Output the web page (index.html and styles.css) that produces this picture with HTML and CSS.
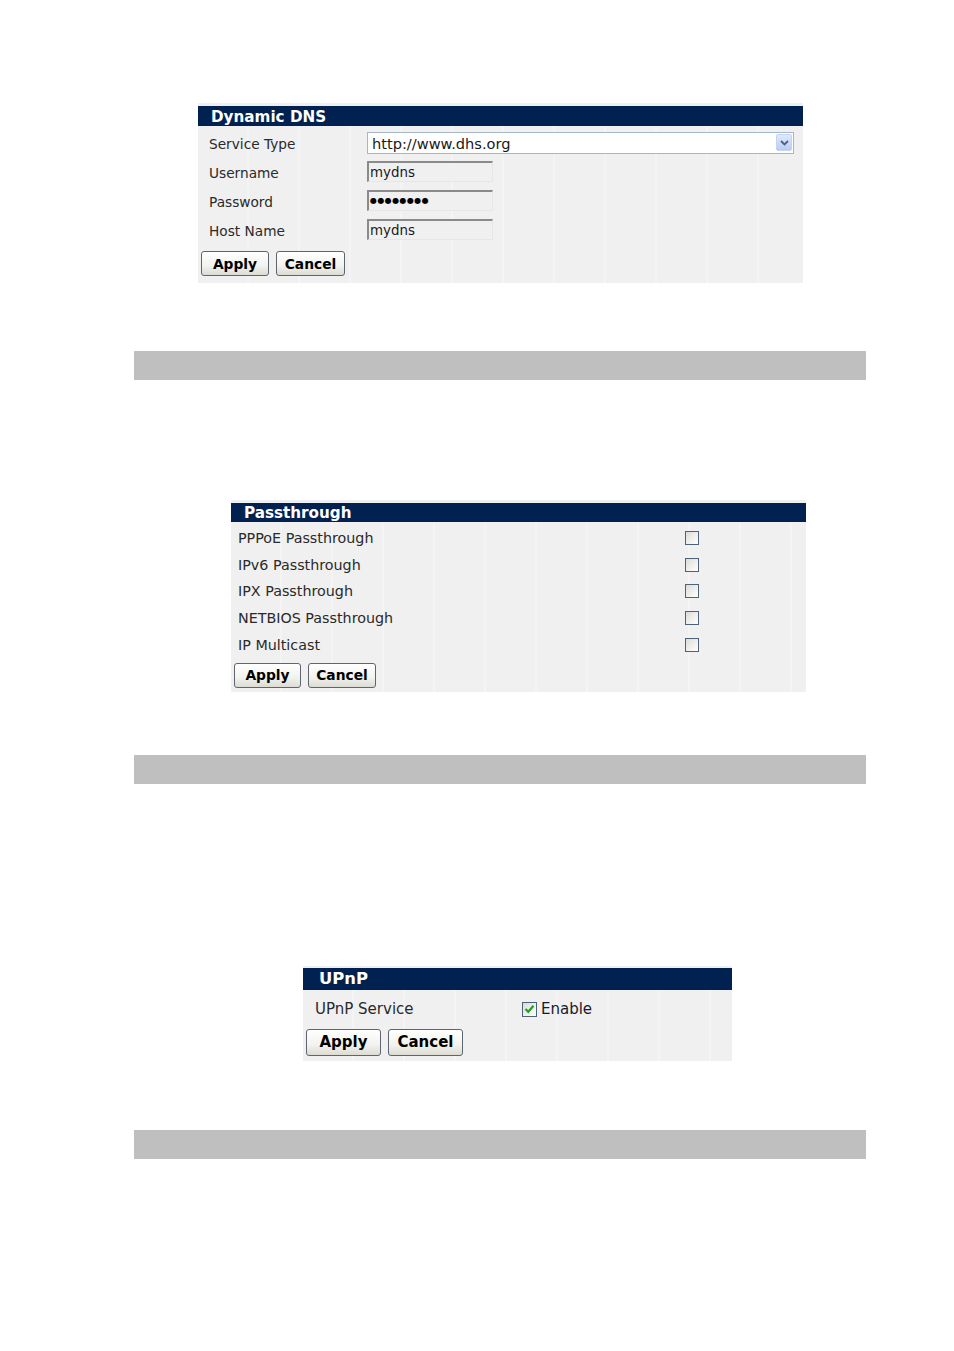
FILE: index.html
```html
<!DOCTYPE html>
<html>
<head>
<meta charset="utf-8">
<link rel="stylesheet" href="styles.css">
</head>
<body>
<div class="page">

  <div class="panel panel-dns">
    <div class="hdr hdr-dns">Dynamic DNS</div>
    <div class="body body-dns">
      <div class="row row-dns">
        <span class="lbl">Service Type</span>
        <div class="select">
          <span class="select-val">http://www.dhs.org</span>
          <span class="select-btn"><svg width="9" height="6" viewBox="0 0 9 6"><path d="M1 1 L4.5 4.5 L8 1" fill="none" stroke="#4d6185" stroke-width="1.8"/></svg></span>
        </div>
      </div>
      <div class="row row-dns">
        <span class="lbl">Username</span>
        <div class="tinput">mydns</div>
      </div>
      <div class="row row-dns">
        <span class="lbl">Password</span>
        <div class="tinput pw">●●●●●●●●</div>
      </div>
      <div class="row row-dns">
        <span class="lbl">Host Name</span>
        <div class="tinput">mydns</div>
      </div>
      <div class="btnrow btnrow-dns">
        <span class="btn btn-s w68">Apply</span>
        <span class="btn btn-s w69">Cancel</span>
      </div>
    </div>
  </div>

  <div class="graybar bar1"></div>

  <div class="panel panel-pt">
    <div class="hdr hdr-pt">Passthrough</div>
    <div class="body body-pt">
      <div class="row row-pt"><span class="lbl">PPPoE Passthrough</span><span class="cb"></span></div>
      <div class="row row-pt"><span class="lbl">IPv6 Passthrough</span><span class="cb"></span></div>
      <div class="row row-pt"><span class="lbl">IPX Passthrough</span><span class="cb"></span></div>
      <div class="row row-pt"><span class="lbl">NETBIOS Passthrough</span><span class="cb"></span></div>
      <div class="row row-pt"><span class="lbl">IP Multicast</span><span class="cb"></span></div>
      <div class="btnrow btnrow-pt">
        <span class="btn btn-s w67">Apply</span>
        <span class="btn btn-s w68">Cancel</span>
      </div>
    </div>
  </div>

  <div class="graybar bar2"></div>

  <div class="panel panel-up">
    <div class="hdr hdr-up">UPnP</div>
    <div class="body body-up">
      <div class="row row-up">
        <span class="lbl">UPnP Service</span>
        <span class="enable"><span class="cb cb-on"><svg width="11" height="10" viewBox="0 0 11 10"><path d="M1.5 5 L4.3 7.8 L9.5 1.8" fill="none" stroke="#21a121" stroke-width="2.2"/></svg></span><span class="en-txt">Enable</span></span>
      </div>
      <div class="btnrow btnrow-up">
        <span class="btn btn-l w75">Apply</span>
        <span class="btn btn-l w75">Cancel</span>
      </div>
    </div>
  </div>

  <div class="graybar bar3"></div>

</div>
</body>
</html>
```

FILE: styles.css
```css
html, body {
  margin: 0;
  padding: 0;
  background: #ffffff;
}
.page {
  width: 954px;
  height: 1351px;
  overflow: hidden;
  font-family: "DejaVu Sans", Verdana, sans-serif;
  color: #2a2a2a;
}
.panel {
  background-color: #f0f0f0;
  border-top: 3px solid #eef0f3;
  box-sizing: border-box;
}
.panel-dns { margin: 103px 0 0 198px; width: 605px; }
.panel-pt { margin: 120px 0 0 231px; width: 575px; }
.panel-up { margin: 182px 0 0 303px; width: 429px; border-top-width: 2px; }

.hdr {
  background: #012150;
  color: #ffffff;
  font-weight: bold;
  white-space: nowrap;
}
.hdr-dns { height: 20px; line-height: 22px; font-size: 15.2px; padding-left: 13px; }
.hdr-pt { height: 19px; line-height: 20px; font-size: 15.2px; padding-left: 13px; }
.hdr-up { height: 22px; line-height: 22px; font-size: 16.4px; padding-left: 16px; }

.body {
  background-image:
    repeating-linear-gradient(90deg, transparent 0 49px, rgba(255,255,255,0.28) 49px 51px);
}
.body-dns { padding-top: 2px; }
.body-pt { padding-top: 3px; }
.body-up { padding-top: 2px; }

.row {
  display: grid;
  align-items: center;
}
.row-dns {
  grid-template-columns: 169px 1fr;
  height: 29px;
  font-size: 13.7px;
}
.row-dns .lbl { padding-left: 11px; padding-top: 2px; }
.row-pt {
  grid-template-columns: 454px 1fr;
  height: 26.6px;
  font-size: 14.3px;
}
.row-pt .lbl { padding-left: 7px; }
.row-up {
  grid-template-columns: 219px 1fr;
  height: 34px;
  font-size: 15px;
}
.row-up .lbl { padding-left: 12px; }

.select {
  width: 427px;
  height: 22px;
  box-sizing: border-box;
  border: 1px solid #a5b6cd;
  background: #ffffff;
  display: flex;
  align-items: center;
  justify-content: space-between;
  font-size: 14.6px;
  color: #1a1a1a;
}
.select-val { padding-left: 4px; padding-top: 1px; }
.select-btn {
  width: 16px;
  height: 17px;
  margin-right: 1px;
  border-radius: 2px;
  background: linear-gradient(#dfe9fb, #b9cdf2);
  border: 1px solid #c4d3ee;
  box-sizing: border-box;
  display: flex;
  align-items: center;
  justify-content: center;
}

.tinput {
  width: 126px;
  height: 21px;
  box-sizing: border-box;
  border-top: 2px solid #8a8a8a;
  border-left: 2px solid #8a8a8a;
  border-right: 1px solid #e6e6e6;
  border-bottom: 1px solid #e6e6e6;
  background: #f0f0f0;
  font-size: 13.4px;
  line-height: 19px;
  padding-left: 1px;
  color: #1a1a1a;
}
.tinput.pw { font-size: 8px; letter-spacing: 0.4px; color: #000; line-height: 18px; }

.btnrow { display: flex; }
.btnrow-dns { gap: 7px; padding: 7px 0 7px 3px; }
.btnrow-pt { gap: 7px; padding: 5px 0 4px 3px; }
.btnrow-up { gap: 7px; padding: 3px 0 5px 3px; }

.btn {
  box-sizing: border-box;
  display: inline-flex;
  align-items: center;
  justify-content: center;
  border: 1px solid #5d6670;
  border-radius: 3px;
  background: linear-gradient(#ffffff, #f2f2ee 60%, #dcdcd4);
  color: #000;
  font-weight: bold;
}
.btn-s { height: 25px; font-size: 13.8px; }
.btn-l { height: 27px; font-size: 15px; }
.w67 { width: 67px; }
.w68 { width: 68px; }
.w69 { width: 69px; }
.w75 { width: 75px; }

.cb {
  width: 14px;
  height: 14px;
  box-sizing: border-box;
  border: 1px solid #4f6378;
  background: linear-gradient(135deg, #dcdcd6, #ffffff);
  display: inline-flex;
  align-items: center;
  justify-content: center;
}
.enable { display: flex; align-items: center; }
.cb-on { width: 15px; height: 15px; margin-top: 1px; }
.en-txt { padding-left: 4px; font-size: 15px; color: #1a1a2a; padding-top: 1px; }

.graybar {
  background: #bfbfbf;
  width: 732px;
  height: 29px;
  margin-left: 134px;
}
.bar1 { margin-top: 68px; }
.bar2 { margin-top: 63px; }
.bar3 { margin-top: 69px; }
```
